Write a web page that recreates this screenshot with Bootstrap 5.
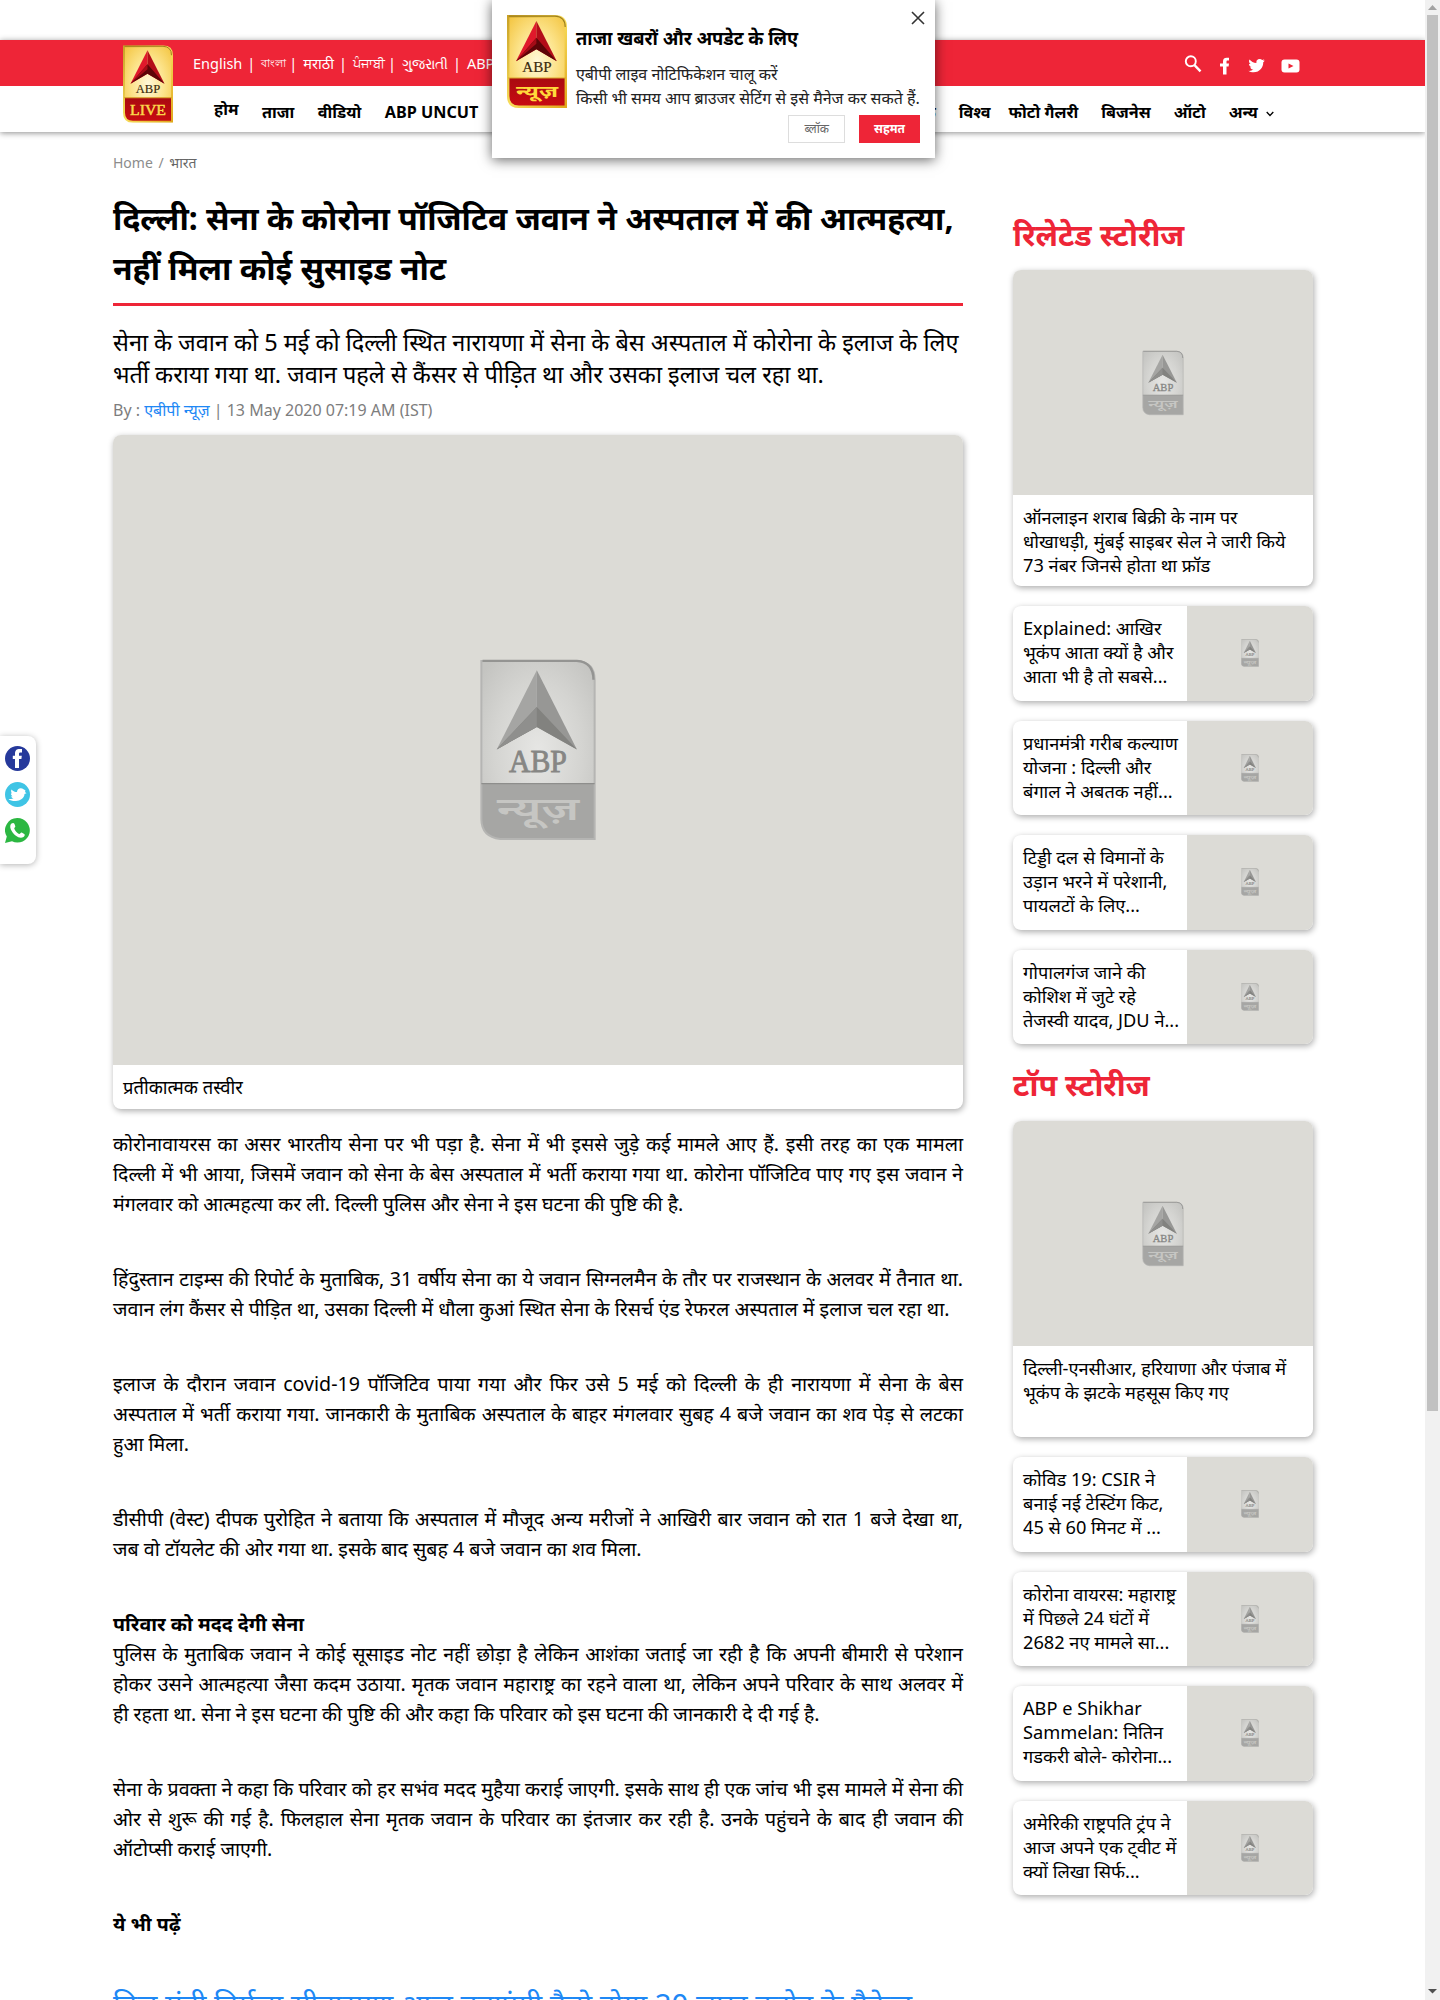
<!DOCTYPE html>
<html lang="hi">
<head>
<meta charset="utf-8">
<title>ABP News</title>
<link rel="stylesheet" href="https://cdn.jsdelivr.net/npm/bootstrap@5.3.0/dist/css/bootstrap.min.css">
<style>
body{font-family:"Noto Sans","Noto Sans Devanagari",sans-serif;color:#000;background:#fff;height:2000px;overflow:hidden}
a{text-decoration:none;color:inherit}
.page-area{width:1425px;height:2000px;overflow:hidden}
.wrap{width:1200px;margin-left:113px}
.site-head{margin-top:40px;height:92px;box-shadow:0 1px 6px rgba(0,0,0,.45)}
.top-strip{height:46px;background:#ee2537;color:#fff}
.langs{font-size:14.5px;line-height:47px;padding-left:80px;white-space:pre}
.langs span{margin-right:5px}
.langs i{font-style:normal;margin-right:6px}
.langs .bn{font-size:10.5px;margin-right:3px}
.langs .pa{font-size:13.4px;margin-right:3px}
.langs .gu{font-size:13.8px}
.head-logo{left:10px;top:5px}
.menu-row{height:46px;font-size:16.2px;font-weight:700;line-height:24px;padding-top:14px;white-space:nowrap}
.menu-row .grp{gap:23px}
.menu-row .grp-start{gap:23.5px}
.home-link{margin-top:-3px}
.icons-top{padding-right:13px}
.crumb{font-size:14px;line-height:20px;color:#8c8c8c;margin-top:21px;word-spacing:2px}
.main-col{width:850px}
.side-col{width:300px}
.headline{font-size:31.9px;line-height:50px;font-weight:700;padding-bottom:10px;border-bottom:3px solid #ee2537;margin:20px 0 0;height:113px;white-space:nowrap}
.standfirst{font-size:23.5px;line-height:32px;margin:20px 0 0;white-space:nowrap}
.byline{font-size:16px;line-height:24px;color:#7d7d7d;margin-top:8px}
.byline a,.more-link{color:#1e88f5}
.box{border-radius:8px;background:#fff;box-shadow:1px 2px 6px rgba(0,0,0,.33);overflow:hidden}
.hold{background:#dcdbd6;display:flex;align-items:center;justify-content:center}
.hero{height:630px}
.cap{font-size:18.4px;line-height:24px;padding:10px;height:44px}
.story{font-size:19.6px;line-height:30px;margin-top:20px;text-align:justify}
.story p{margin:0 0 45px}
.more-link{font-size:29.4px;line-height:40px;white-space:nowrap;margin-top:6px}
.side-title{color:#ee2537;font-size:30.5px;font-weight:700;line-height:40px;margin:0}
.side-text{font-size:18.2px;line-height:24px;padding:10px 8px 0 10px;white-space:nowrap}
.lead-box{margin-bottom:20px;height:316px}
.lead-box .hold{height:225px}
.mini{height:94.5px;margin-bottom:20px}
.mini .side-text{width:174px}
.mini .hold{width:126px}
.notice{left:492px;top:0;width:443px;height:158px;background:#fff;box-shadow:0 2px 12px rgba(0,0,0,.6);z-index:5;padding:15px 15px 0}
.notice h2{font-size:18.3px;font-weight:700;line-height:26px;margin:10px 0 11px}
.notice p{font-size:16px;line-height:24px;margin:0;white-space:nowrap;color:#222}
.nbtn{height:28px;font-size:12px;line-height:26px;padding:0 15px;border:1px solid #ddd;border-radius:0;color:#666;background:#fff}
.nbtn.ok{background:#ee2537;border-color:#ee2537;color:#fff;font-weight:700;padding:0 14px}
.close-x{right:8px;top:10px}
.share{left:0;top:736px;width:36px;height:128px;background:#fff;border-radius:0 8px 8px 0;box-shadow:0 1px 6px rgba(0,0,0,.3);padding:10px 0 0 5px;gap:11px}
.sbar{width:15px;height:2000px;background:#f1f1f1;padding:5px 0 6px}
.thumb{width:11px;height:1396px;background:#c1c1c1}
</style>
<script src="https://cdn.jsdelivr.net/npm/bootstrap@5.3.0/dist/js/bootstrap.bundle.min.js"></script>
</head>
<body>
<svg width="0" height="0" class="position-absolute">
<defs>
<radialGradient id="gold" cx=".5" cy=".5" r=".7"><stop offset="0" stop-color="#fff8d8"/><stop offset=".5" stop-color="#fce38a"/><stop offset="1" stop-color="#f3c33c"/></radialGradient>
<linearGradient id="redbar" x1="0" y1="0" x2="0" y2="1"><stop offset="0" stop-color="#a90a10"/><stop offset="1" stop-color="#c90b12"/></linearGradient>
<linearGradient id="edge" x1="0" y1="0" x2="1" y2="1"><stop offset="0" stop-color="#c9a227"/><stop offset=".5" stop-color="#f7dc5a"/><stop offset="1" stop-color="#e0a81c"/></linearGradient>
<radialGradient id="silver" cx=".5" cy=".5" r=".65"><stop offset="0" stop-color="#e6e6e4"/><stop offset=".6" stop-color="#d4d4d1"/><stop offset="1" stop-color="#c4c4c1"/></radialGradient>
<symbol id="lg-color" viewBox="0 0 100 155">
<path d="M2 2H80Q98 2 98 20V153H20Q2 153 2 135Z" fill="url(#gold)"/>
<path d="M2 105H98V153H20Q2 153 2 135Z" fill="url(#redbar)"/>
<path d="M2 2H80Q98 2 98 20V153H20Q2 153 2 135Z" fill="none" stroke="url(#edge)" stroke-width="4"/>
<path d="M3 2H80Q97 3 97 20" fill="none" stroke="#9f7e1d" stroke-width="2"/>
<path d="M2 105H98" stroke="#d9a52a" stroke-width="2"/>
<path d="M49 10L15 77L49 57Z" fill="#e0192b"/><path d="M49 10L83 77L49 57Z" fill="#b30d18"/>
<path d="M49 38L15 77L49 57L83 77Z" fill="#5d0508"/><path d="M49 38L15 77L49 48Z" fill="#a50c17"/>
<text x="50" y="95" text-anchor="middle" font-family="Liberation Serif" font-size="25" fill="#3a2a0c" stroke="#3a2a0c" stroke-width=".3" textLength="49" lengthAdjust="spacingAndGlyphs">ABP</text>
</symbol>
<symbol id="lg-gray" viewBox="0 0 100 155">
<path d="M2 2H83Q98 3 98 18V153H18Q2 151 2 136Z" fill="url(#silver)"/>
<path d="M2 106H98V153H18Q2 151 2 136Z" fill="#a6a6a4"/>
<path d="M2 2H83Q98 3 98 18V153H18Q2 151 2 136Z" fill="none" stroke="#b5b5b3" stroke-width="1.7"/>
<path d="M3 2H83Q97 3 97 18" fill="none" stroke="#949492" stroke-width="2"/>
<path d="M2 106H98" stroke="#8e8e8c"/>
<path d="M49 10L15 77L49 58Z" fill="#a5a5a3"/><path d="M49 10L83 77L49 58Z" fill="#979795"/>
<path d="M49 41L15 77L49 58L83 77Z" fill="#82827f"/><path d="M49 41L15 77L49 58Z" fill="#8f8f8d"/>
<text x="50" y="96" text-anchor="middle" font-family="Liberation Serif" font-size="26" fill="#868684" stroke="#868684" stroke-width=".7" textLength="49" lengthAdjust="spacingAndGlyphs">ABP</text>
<text x="50" y="137" text-anchor="middle" font-family="Noto Sans" font-size="27" font-weight="600" fill="#c6c6c3" textLength="70" lengthAdjust="spacingAndGlyphs">न्यूज़</text>
</symbol>
<symbol id="bird" viewBox="0 0 24 24"><path d="M23.6 5c-.8.4-1.700.6-2.700.8 1-.6 1.700-1.500 2.100-2.600-.9.500-1.900.9-3 1.100A4.800 4.800 0 0 0 11.800 8.600C7.900 8.400 4.400 6.500 2.100 3.700c-1.300 2.100-.6 4.900 1.500 6.300-.8 0-1.500-.2-2.200-.6 0 2.300 1.600 4.300 3.800 4.800-.7.2-1.400.2-2.100.1.600 1.900 2.400 3.300 4.500 3.300A9.600 9.600 0 0 1 .5 19.500C2.600 20.900 5.200 21.700 7.900 21.700c8.900 0 13.900-7.500 13.600-14.200.9-.7 1.600-1.500 2.100-2.500z"/></symbol>
</defs>
</svg>
<div class="d-flex">
<div class="page-area">
  <header class="site-head">
    <div class="top-strip">
      <div class="wrap d-flex justify-content-between position-relative">
        <a class="head-logo position-absolute" href="#"><svg class="d-block" width="50" height="78" viewBox="0 0 100 155"><use href="#lg-color"/><text x="50" y="139" text-anchor="middle" font-family="Liberation Serif" font-size="30" fill="#fbd84c" stroke="#fbd84c" textLength="72" lengthAdjust="spacingAndGlyphs">LIVE</text></svg></a>
        <div class="langs d-flex"><span>English</span><i>|</i><span class="bn">বাংলা</span><i>|</i><span>मराठी</span><i>|</i><span class="pa">ਪੰਜਾਬੀ</span><i>|</i><span class="gu">ગુજરાતી</span><i>|</i><span>ABP நாடு</span></div>
        <div class="icons-top d-flex align-items-center">
          <svg width="18" height="18" viewBox="0 0 18 18" fill="none" stroke="#fff" stroke-width="1.900"><circle cx="6.800" cy="6.300" r="5"/><path d="M10.500 10.200L16.500 16.300" stroke-width="2.400"/></svg>
          <svg class="ms-3 mt-1" width="14" height="18" viewBox="0 0 14 18" fill="#fff"><path d="M5 17.500V9.500H2V6.500H5V4.300C5 1.700 6.500.7 8.700.7H11V3.600H9.600C8.700 3.600 8.500 4 8.500 4.700V6.500H11L10.600 9.500H8.500V17.500Z"/></svg>
          <svg class="ms-3 mt-1" width="17" height="17" fill="#fff"><use href="#bird"/></svg>
          <svg class="mt-1" style="margin-left:16px" width="19" height="14" viewBox="0 0 19 14"><rect x=".5" y=".5" width="18" height="13" rx="3" fill="#fff"/><path d="M7.500 4.500V9.500L12.500 7Z" fill="#ee2537"/></svg>
        </div>
      </div>
    </div>
    <nav class="menu-row">
      <div class="wrap d-flex justify-content-between">
        <div class="grp grp-start d-flex" style="padding-left:101px"><a class="home-link" href="#">होम</a><a href="#">ताजा</a><a href="#">वीडियो</a><a href="#">ABP UNCUT</a></div>
        <div class="grp d-flex" style="padding-right:39px"><a href="#">तकनीक</a><a href="#">विश्व</a><a href="#" style="margin-left:-5px">फोटो गैलरी</a><a href="#">बिजनेस</a><a href="#">ऑटो</a><a href="#">अन्य <svg class="ms-1" width="8" height="6" viewBox="0 0 8 6" fill="none" stroke="#000" stroke-width="1.300"><path d="M.7 1L4 4.500L7.300 1"/></svg></a></div>
      </div>
    </nav>
  </header>

  <div class="wrap">
    <div class="crumb">Home / <span style="color:#666">भारत</span></div>
    <div class="d-flex justify-content-between">
      <main class="main-col">
        <h1 class="headline">दिल्ली: सेना के कोरोना पॉजिटिव जवान ने अस्पताल में की आत्महत्या,<br>नहीं मिला कोई सुसाइड नोट</h1>
        <p class="standfirst">सेना के जवान को 5 मई को दिल्ली स्थित नारायणा में सेना के बेस अस्पताल में कोरोना के इलाज के लिए<br>भर्ती कराया गया था. जवान पहले से कैंसर से पीड़ित था और उसका इलाज चल रहा था.</p>
        <div class="byline">By : <a href="#">एबीपी न्यूज़</a> | 13 May 2020 07:19 AM (IST)</div>
        <figure class="box m-0" style="margin-top:13px!important">
          <div class="hold hero"><svg width="118" height="184"><use href="#lg-gray"/></svg></div>
          <figcaption class="cap">प्रतीकात्मक तस्वीर</figcaption>
        </figure>
        <article class="story">
          <p>कोरोनावायरस का असर भारतीय सेना पर भी पड़ा है. सेना में भी इससे जुड़े कई मामले आए हैं. इसी तरह का एक मामला दिल्ली में भी आया, जिसमें जवान को सेना के बेस अस्पताल में भर्ती कराया गया था. कोरोना पॉजिटिव पाए गए इस जवान ने मंगलवार को आत्महत्या कर ली. दिल्ली पुलिस और सेना ने इस घटना की पुष्टि की है.</p>
          <p>हिंदुस्तान टाइम्स की रिपोर्ट के मुताबिक, 31 वर्षीय सेना का ये जवान सिग्नलमैन के तौर पर राजस्थान के अलवर में तैनात था. जवान लंग कैंसर से पीड़ित था, उसका दिल्ली में धौला कुआं स्थित सेना के रिसर्च एंड रेफरल अस्पताल में इलाज चल रहा था.</p>
          <p>इलाज के दौरान जवान covid-19 पॉजिटिव पाया गया और फिर उसे 5 मई को दिल्ली के ही नारायणा में सेना के बेस अस्पताल में भर्ती कराया गया. जानकारी के मुताबिक अस्पताल के बाहर मंगलवार सुबह 4 बजे जवान का शव पेड़ से लटका हुआ मिला.</p>
          <p>डीसीपी (वेस्ट) दीपक पुरोहित ने बताया कि अस्पताल में मौजूद अन्य मरीजों ने आखिरी बार जवान को रात 1 बजे देखा था, जब वो टॉयलेट की ओर गया था. इसके बाद सुबह 4 बजे जवान का शव मिला.</p>
          <p><strong>परिवार को मदद देगी सेना</strong><br>पुलिस के मुताबिक जवान ने कोई सूसाइड नोट नहीं छोड़ा है लेकिन आशंका जताई जा रही है कि अपनी बीमारी से परेशान होकर उसने आत्महत्या जैसा कदम उठाया. मृतक जवान महाराष्ट्र का रहने वाला था, लेकिन अपने परिवार के साथ अलवर में ही&nbsp;रहता था. सेना ने इस घटना की पुष्टि की और कहा कि परिवार को इस घटना की जानकारी दे दी गई है.</p>
          <p>सेना के प्रवक्ता ने कहा कि परिवार को हर सभंव मदद मुहैया कराई जाएगी. इसके साथ ही एक जांच भी इस मामले में सेना की ओर से शुरू की गई है. फिलहाल सेना मृतक जवान के परिवार का इंतजार कर रही है. उनके पहुंचने के बाद ही जवान की ऑटोप्सी कराई जाएगी.</p>
          <p><strong>ये भी पढ़ें</strong></p>
          <div class="more-link">वित्त मंत्री निर्मला सीतारमण आज बताएंगी कैसे होगा 20 लाख करोड़ के पैकेज</div>
        </article>
      </main>
      <aside class="side-col">
        <h3 class="side-title" style="margin:41px 0 16px">रिलेटेड स्टोरीज</h3>
        <div class="box lead-box"><div class="hold"><svg width="42" height="66"><use href="#lg-gray"/></svg></div><div class="side-text">ऑनलाइन शराब बिक्री के नाम पर<br>धोखाधड़ी, मुंबई साइबर सेल ने जारी किये<br>73 नंबर जिनसे होता था फ्रॉड</div></div>
        <div class="box mini d-flex"><div class="side-text">Explained: आखिर<br>भूकंप आता क्यों है और<br>आता भी है तो सबसे...</div><div class="hold"><svg width="18" height="28"><use href="#lg-gray"/></svg></div></div>
        <div class="box mini d-flex"><div class="side-text">प्रधानमंत्री गरीब कल्याण<br>योजना : दिल्ली और<br>बंगाल ने अबतक नहीं...</div><div class="hold"><svg width="18" height="28"><use href="#lg-gray"/></svg></div></div>
        <div class="box mini d-flex"><div class="side-text">टिड्डी दल से विमानों के<br>उड़ान भरने में परेशानी,<br>पायलटों के लिए...</div><div class="hold"><svg width="18" height="28"><use href="#lg-gray"/></svg></div></div>
        <div class="box mini d-flex"><div class="side-text">गोपालगंज जाने की<br>कोशिश में जुटे रहे<br>तेजस्वी यादव, JDU ने...</div><div class="hold"><svg width="18" height="28"><use href="#lg-gray"/></svg></div></div>
        <h3 class="side-title" style="margin:0 0 17px">टॉप स्टोरीज</h3>
        <div class="box lead-box"><div class="hold"><svg width="42" height="66"><use href="#lg-gray"/></svg></div><div class="side-text">दिल्ली-एनसीआर, हरियाणा और पंजाब में<br>भूकंप के झटके महसूस किए गए</div></div>
        <div class="box mini d-flex"><div class="side-text">कोविड 19: CSIR ने<br>बनाई नई टेस्टिंग किट,<br>45 से 60 मिनट में ...</div><div class="hold"><svg width="18" height="28"><use href="#lg-gray"/></svg></div></div>
        <div class="box mini d-flex"><div class="side-text">कोरोना वायरस: महाराष्ट्र<br>में पिछले 24 घंटों में<br>2682 नए मामले सा...</div><div class="hold"><svg width="18" height="28"><use href="#lg-gray"/></svg></div></div>
        <div class="box mini d-flex"><div class="side-text">ABP e Shikhar<br>Sammelan: नितिन<br>गडकरी बोले- कोरोना...</div><div class="hold"><svg width="18" height="28"><use href="#lg-gray"/></svg></div></div>
        <div class="box mini d-flex"><div class="side-text">अमेरिकी राष्ट्रपति ट्रंप ने<br>आज अपने एक ट्वीट में<br>क्यों लिखा सिर्फ...</div><div class="hold"><svg width="18" height="28"><use href="#lg-gray"/></svg></div></div>
      </aside>
    </div>
  </div>
</div>
<div class="sbar d-flex flex-column align-items-center">
  <svg width="9" height="10" viewBox="0 0 9 10"><path d="M0 5L4.500 0L9 5Z" fill="#a3a3a3"/></svg>
  <div class="thumb"></div>
  <svg class="mt-auto" width="9" height="5" viewBox="0 0 9 5"><path d="M0 0H9L4.500 4.500Z" fill="#505050"/></svg>
</div>
</div>

<div class="notice position-absolute">
  <svg class="close-x position-absolute" width="18" height="17" viewBox="0 0 18 17" stroke="#333" stroke-width="1.600"><path d="M3 2L15 14M15 2L3 14"/></svg>
  <div class="d-flex">
    <svg width="60" height="93" viewBox="0 0 100 155"><use href="#lg-color"/><text x="50" y="137" text-anchor="middle" font-family="Noto Sans" font-size="26" font-weight="700" fill="#ffd93b" textLength="70" lengthAdjust="spacingAndGlyphs">न्यूज़</text></svg>
    <div style="margin-left:9px"><h2>ताजा खबरों और अपडेट के लिए</h2><p>एबीपी लाइव नोटिफिकेशन चालू करें</p><p>किसी भी समय आप ब्राउजर सेटिंग से इसे मैनेज कर सकते हैं.</p></div>
  </div>
  <div class="d-flex justify-content-end" style="gap:14px;margin-top:5px"><button class="nbtn">ब्लॉक</button><button class="nbtn ok">सहमत</button></div>
</div>

<div class="share position-absolute d-flex flex-column">
  <svg width="25" height="25" viewBox="0 0 25 25"><circle cx="12.500" cy="12.500" r="12.500" fill="#26399b"/><path d="M10 22V13H7.800V9.700H10V7.700C10 4.300 11.800 3 14.500 3H17V6.500H15.500C14.300 6.500 14 7 14 8V9.700H16.800L16.400 13H14V22Z" fill="#fff"/></svg>
  <svg width="25" height="25" viewBox="0 0 25 25"><circle cx="12.500" cy="12.500" r="12.500" fill="#3fc4e5"/><path d="M6.500 7.500C8.500 9.500 10.500 10.200 12 10C12 7.500 14 6 16 6.200C17.500 6.200 18.300 7 19 7.500L20.500 8.500L20 10L21.500 11.200L19.500 12C19.500 16 15 19 11 19C8 19.200 5 18.500 3.500 17C5.500 17.300 7.500 17 8.500 16.300C7 16 6.200 15 6.200 14.200H7.500C6.200 13.500 5.800 12.200 6 11.300L7 11.500C6 10.200 5.800 9 6.500 7.500Z" fill="#fff"/></svg>
  <svg width="25" height="25" viewBox="0 0 25 25"><path d="M12.500 0A12.300 12.300 0 1 1 7 23.300L0 25L1.800 18.600A12.300 12.300 0 0 1 12.500 0Z" fill="#2cb742"/><path d="M6.500 5.500C8 4.500 9 5 9.500 6L10.300 8.300C10.500 9.300 9 9.700 9.300 10.800C10 13 12 15 14 15.900C15.200 16.200 15.700 14.300 16.700 14.600L19.200 16C20.200 16.700 19.700 18 18.500 19C14.500 21.200 9.500 17.500 7.300 14C5.300 11 4.300 7.600 6.500 5.500Z" fill="#fff"/></svg>
</div>
</body>
</html>
